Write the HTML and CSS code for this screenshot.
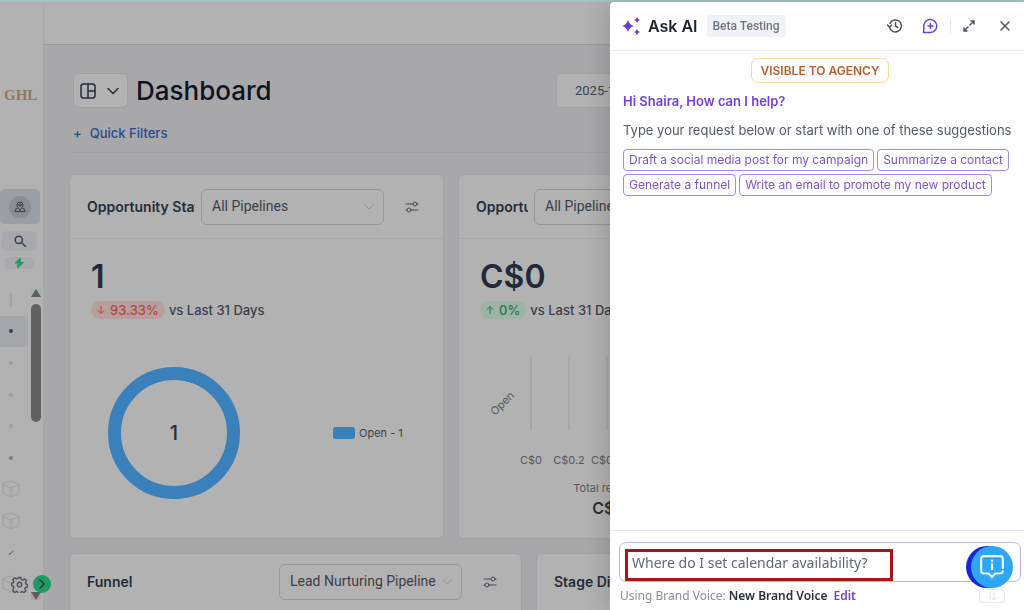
FILE: index.html
```html
<!DOCTYPE html>
<html lang="en">
<head>
  <meta charset="utf-8" />
  <meta name="viewport" content="width=device-width, initial-scale=1" />
  <link rel="stylesheet" href="styles.css">
  <title>Dashboard</title>
</head>
<body>
  <svg class="sprite" aria-hidden="true">
    <symbol id="chevron" viewBox="0 0 12 12"><path d="M1 3.500l5 5 5-5"/></symbol>
    <symbol id="sliders" viewBox="0 0 14 12"><path d="M1 3h7M6 9h7M1 9h1M12 3h1"/><circle cx="10" cy="3" r="2"/><circle cx="4" cy="9" r="2"/></symbol>
    <symbol id="cube" viewBox="0 0 20 20"><path d="M10 2l8 3.500v9L10 18l-8-3.500v-9zM2 5.500L10 9l8-3.500M10 9v9"/></symbol>
  </svg>

  <div class="app">
    <nav class="sidebar">
      <div class="logo">GHL</div>
      <button class="side-btn account" aria-label="Switch account">
        <svg viewBox="0 0 22 22"><circle class="disc" cx="11" cy="11" r="11"/><circle cx="11" cy="9" r="1.200"/><path d="M11 14c-2-2-3-3.300-3-5a3 3 0 0 1 6 0c0 1.700-1 3-3 5zM8 12.500H7L6 15.500h10l-1-3h-1"/></svg>
      </button>
      <button class="side-btn search" aria-label="Search">
        <svg viewBox="0 0 12 12"><circle cx="4.800" cy="4.800" r="3.600"/><path d="M7.500 7.500l4 4"/></svg>
      </button>
      <button class="side-btn bolt" aria-label="Quick actions">
        <svg viewBox="0 0 10 10"><path d="M6 0L1 5h3L3.500 10 9.500 4.500H6.500z"/></svg>
      </button>
      <div class="side-scroll">
        <ul class="side-list">
          <li><i class="tick"></i></li>
          <li class="active"><i class="dot"></i></li>
          <li><i class="dot faint"></i></li>
          <li><i class="dot hollow"></i></li>
          <li><i class="dot hollow"></i></li>
          <li><i class="dot mid"></i></li>
          <li><svg class="cube"><use href="#cube"/></svg></li>
          <li><svg class="cube"><use href="#cube"/></svg></li>
          <li><svg class="pen" viewBox="0 0 6 6"><path d="M1 5l1-2 1 .5L5 1"/></svg></li>
          <li><svg class="cube"><use href="#cube"/></svg></li>
        </ul>
        <div class="scrollbar">
          <i class="arrow up"></i>
          <i class="thumb"></i>
          <i class="arrow down"></i>
        </div>
      </div>
      <div class="side-bottom">
        <button aria-label="Settings">
          <svg class="gear" viewBox="0 0 24 24"><circle cx="12" cy="12" r="3.200"/><path d="M10 2h4l.7 3 1.800.8 2.700-1.600 2.700 2.700-1.600 2.700.8 1.800 1.900.6v4l-2.700.3-.8 1.800 1.600 2.700-2.700 2.700-2.700-1.600-1.700.8-.6 2.300h-3l-.8-2.500-1.800-.8-2.700 1.600-2.700-2.700L4 16l-.8-1.800L1 13.500v-3.500l2.300-.4L4 7.900 2.500 5.200 5.200 2.500 7.900 4l1.600-.6z"/></svg>
        </button>
        <button class="expand" aria-label="Expand menu">
          <svg viewBox="0 0 18 18"><path d="M7 5l4 4-4 4"/></svg>
        </button>
      </div>
    </nav>

    <main class="main">
      <div class="topbar"></div>
      <div class="content">
        <header class="page-head">
          <button class="layout-btn" aria-label="Change dashboard">
            <svg class="layout-icon" viewBox="0 0 16 16"><rect x="1" y="1" width="14" height="14" rx="2.500"/><path d="M8 1v14M8 8h7"/></svg>
            <svg class="chev"><use href="#chevron"/></svg>
          </button>
          <h1>Dashboard</h1>
          <button class="date-btn">2025-11-01</button>
        </header>
        <a class="quick" href="#"><span>+</span>Quick Filters</a>

        <div class="cards">
          <section class="card">
            <div class="card-head">
              <h2>Opportunity Status</h2>
              <div class="select">
                <select aria-label="Pipeline"><option>All Pipelines</option></select>
                <svg><use href="#chevron"/></svg>
              </div>
              <button class="tune" aria-label="Card settings"><svg><use href="#sliders"/></svg></button>
            </div>
            <div class="card-body">
              <div class="big">1</div>
              <div class="trend">
                <span class="pill down"><svg viewBox="0 0 8 8"><path d="M4 0v7.500M1 4.500l3 3 3-3"/></svg>93.33%</span>
                vs Last 31 Days
              </div>
              <div class="donut-row">
                <svg class="donut" viewBox="0 0 132 132"><circle cx="66" cy="66" r="59.500"/><text x="66" y="73">1</text></svg>
                <div class="legend"><i></i>Open - 1</div>
              </div>
            </div>
          </section>

          <section class="card">
            <div class="card-head">
              <h2>Opportunity Value</h2>
              <div class="select">
                <select aria-label="Pipeline"><option>All Pipelines</option></select>
                <svg><use href="#chevron"/></svg>
              </div>
            </div>
            <div class="card-body">
              <div class="big">C$0</div>
              <div class="trend">
                <span class="pill up"><svg viewBox="0 0 8 8"><path d="M4 8V.5M1 3.500l3-3 3 3"/></svg>0%</span>
                vs Last 31 Days
              </div>
              <svg class="bars" viewBox="0 0 280 120">
                <path d="M51 10v73M89 10v73M127 10v73M165 10v73"/>
                <text class="ylabel" x="0" y="0" transform="translate(15 69) rotate(-45)">Open</text>
                <text x="51" y="117">C$0</text>
                <text x="89" y="117">C$0.2</text>
                <text x="127" y="117">C$0.4</text>
                <text x="165" y="117">C$0.6</text>
              </svg>
              <div class="revenue">Total revenue<strong>C$0</strong></div>
            </div>
          </section>
        </div>

        <div class="cards wide">
          <section class="card">
            <div class="card-head">
              <h2>Funnel</h2>
              <div class="select">
                <select aria-label="Funnel pipeline"><option>Lead Nurturing Pipeline</option></select>
                <svg><use href="#chevron"/></svg>
              </div>
              <button class="tune" aria-label="Card settings"><svg><use href="#sliders"/></svg></button>
            </div>
          </section>
          <section class="card">
            <div class="card-head"><h2>Stage Distribution</h2></div>
          </section>
        </div>
      </div>
    </main>
  </div>

  <aside class="drawer">
    <header class="drawer-head">
      <svg class="sparkle" viewBox="0 0 18 18"><path d="M6 3q1.200 5 6 6-4.800 1-6 6-1.200-5-6-6 4.800-1 6-6zM15 0q.6 2.400 3 3-2.400.6-3 3-.6-2.400-3-3 2.400-.6 3-3zM15 12q.6 2.400 3 3-2.400.6-3 3-.6-2.400-3-3 2.400-.6 3-3z"/></svg>
      <h2>Ask AI</h2>
      <span class="beta">Beta Testing</span>
      <div class="tools">
        <button aria-label="History"><svg viewBox="0 0 16 16"><path d="M2.500 9A6 6 0 1 0 3 5.300M.6 7L2.500 9.200 4.700 7M8.500 4.500V8l2.300 1.500"/></svg></button>
        <button class="new" aria-label="New chat"><svg viewBox="0 0 16 16"><path d="M1.500 14.500l.5-5A6.500 6.500 0 1 1 8.500 14.500zM8.500 5.500v5M6 8h5"/></svg></button>
        <i></i>
        <button aria-label="Expand"><svg class="small" viewBox="0 0 12 12"><path d="M7 5l4-4M8 1h3v3M5 7l-4 4M1 8v3h3"/></svg></button>
        <button aria-label="Close"><svg class="close" viewBox="0 0 12 12"><path d="M2 2l8 8M10 2l-8 8"/></svg></button>
      </div>
    </header>

    <div class="chat">
      <div class="visible">VISIBLE TO AGENCY</div>
      <p class="hello">Hi Shaira, How can I help?</p>
      <p class="hint">Type your request below or start with one of these suggestions</p>
      <div class="chips">
        <button>Draft a social media post for my campaign</button>
        <button>Summarize a contact</button>
        <button>Generate a funnel</button>
        <button>Write an email to promote my new product</button>
      </div>
    </div>

    <footer class="composer">
      <div class="prompt">
        <input type="text" aria-label="Ask a question" value="Where do I set calendar availability?">
        <span class="highlight"></span>
      </div>
      <div class="voice">
        Using Brand Voice: <strong>New Brand Voice</strong> <a href="#">Edit</a>
        <button class="send" aria-label="Send"><svg viewBox="0 0 12 12"><path d="M4 2v7M8 3v7M6 8l2 2 2-2"/></svg></button>
      </div>
      <button class="help" aria-label="Help">
        <svg viewBox="0 0 24 24"><path d="M22 13V4.500A2.500 2.500 0 0 0 19.500 2h-15A2.500 2.500 0 0 0 2 4.500v11A2.500 2.500 0 0 0 4.500 18H9l3 3.500L15 18h4.500a2.500 2.500 0 0 0 2.500-2M12 9.500V14M12 6v.5"/></svg>
      </button>
    </footer>
  </aside>
</body>
</html>
```
FILE: styles.css
```css
* {
  box-sizing: border-box;
}
body {
  margin: 0;
  height: 100vh;
  overflow: hidden;
  border-top: 2px solid #a6c3c6;
  font-family: Inter, "Liberation Sans", sans-serif;
  font-size: 13px;
  color: #272d3a;
  background: #a8a8aa;
}
h1, h2, p, ul {
  margin: 0;
  padding: 0;
}
button, select, input {
  font: inherit;
  color: inherit;
  margin: 0;
  padding: 0;
  border: none;
  background: none;
}
svg {
  display: block;
  fill: none;
  stroke: currentColor;
  stroke-linecap: round;
  stroke-linejoin: round;
}
.sprite {
  position: absolute;
  width: 0;
  height: 0;
}
.app {
  display: flex;
  height: 100%;
}

/* sidebar */
.sidebar {
  position: relative;
  flex: 0 0 44px;
  display: flex;
  flex-direction: column;
  background: #b1b1b1;
  border-right: 1px solid #a9a9ac;
}
.logo {
  margin: 82px 0 83px 4px;
  font: bold 15px/22px "Liberation Serif", serif;
  color: #8f7962;
}
.side-btn {
  display: flex;
  align-items: center;
  justify-content: center;
  flex: none;
  background: #a8a9ac;
  border-radius: 5px;
  color: #3a3e46;
}
.account {
  width: 40px;
  height: 35px;
  background: #9b9fa3;
}
.account svg {
  width: 22px;
  height: 22px;
}
.account .disc {
  fill: #8b8d90;
  stroke: none;
}
.search {
  width: 35px;
  height: 20px;
  margin: 7px 0 6px 2px;
}
.search svg {
  width: 12px;
  height: 12px;
  stroke-width: 1.5;
}
.bolt {
  width: 30px;
  height: 12px;
  margin-left: 4px;
}
.bolt svg {
  width: 10px;
  height: 10px;
  fill: #1f9d68;
  stroke: #1f9d68;
}
.side-scroll {
  flex: 1;
  display: flex;
  justify-content: space-between;
  margin: 15px 1px 10px 0;
}
.side-list {
  width: 28px;
  display: flex;
  flex-direction: column;
  list-style: none;
}
.side-list li {
  flex: 1;
  display: flex;
  align-items: center;
  justify-content: center;
  padding-right: 6px;
}
.side-list .active {
  background: #a5a6a9;
  border-radius: 0 4px 4px 0;
}
.tick {
  width: 2px;
  height: 14px;
  background: #a2a2a4;
}
.dot {
  width: 4px;
  height: 4px;
  border-radius: 2px;
  background: #3d4047;
}
.dot.faint {
  background: #9d9da0;
}
.dot.hollow {
  background: none;
  border: 1px solid #94969a;
}
.dot.mid {
  background: #7a7d82;
}
.cube {
  flex: none;
  width: 20px;
  height: 20px;
  color: #a0a1a4;
}
.pen {
  width: 6px;
  height: 6px;
  color: #5c5f66;
}
.scrollbar {
  display: flex;
  flex-direction: column;
  align-items: center;
  width: 12px;
  padding-top: 5px;
}
.arrow {
  border: 5px solid transparent;
}
.arrow.up {
  border-top: none;
  border-bottom: 8px solid #5d5d5d;
}
.arrow.down {
  margin-top: auto;
  border-bottom: none;
  border-top: 8px solid #5d5d5d;
}
.thumb {
  width: 10px;
  height: 38%;
  margin-top: 7px;
  border-radius: 5px;
  background: #616161;
}
.side-bottom {
  position: absolute;
  left: 11px;
  bottom: 17px;
  display: flex;
  align-items: center;
  gap: 5px;
  color: #4f535a;
}
.gear {
  width: 17px;
  height: 17px;
  stroke-width: 2;
}
.expand {
  border-radius: 50%;
  background: #1f9a66;
  color: #173f31;
}
.expand svg {
  width: 18px;
  height: 18px;
  stroke-width: 1.5;
}

/* dashboard */
.main {
  flex: 1;
  min-width: 0;
  overflow: hidden;
}
.topbar {
  height: 43px;
  background: #b1b1b1;
  border-bottom: 1px solid #9b9b9e;
}
.content {
  width: 1160px;
  padding: 28px 25px 0;
}
.page-head {
  display: flex;
  align-items: center;
  margin-left: 4px;
}
.layout-btn {
  display: flex;
  align-items: center;
  justify-content: space-between;
  width: 55px;
  height: 35px;
  padding: 0 8px 0 6px;
  background: #b2b2b2;
  border: 1px solid #a0a0a3;
  border-radius: 6px;
}
.layout-icon {
  width: 16px;
  height: 16px;
  stroke-width: 1.5;
}
.chev {
  width: 12px;
  height: 12px;
  stroke-width: 1.5;
}
h1 {
  width: 420px;
  margin-left: 8px;
  font-size: 26px;
  line-height: 34px;
  font-weight: 500;
  color: #10141f;
}
.date-btn {
  width: 240px;
  height: 35px;
  padding-left: 18px;
  text-align: left;
  font-family: Roboto, sans-serif;
  color: #3f434c;
  background: #b2b2b2;
  border: 1px solid #a3a3a6;
  border-radius: 4px;
}
.quick {
  display: flex;
  gap: 8px;
  margin: 16px 0 21px 4px;
  padding-bottom: 10px;
  border-bottom: 1px solid #a1a1a4;
  line-height: 18px;
  font-weight: 500;
  color: #294a94;
  text-decoration: none;
}
.cards {
  display: flex;
  gap: 14px;
  margin-bottom: 14px;
}
.card {
  flex: 0 0 375px;
  height: 365px;
  background: #b2b2b2;
  border: 1px solid #a2a2a6;
  border-radius: 6px;
}
.wide .card {
  flex-basis: 453px;
}
.card-head {
  display: flex;
  align-items: center;
  height: 64px;
  padding-left: 17px;
  border-bottom: 1px solid #a8a8aa;
}
.wide .card-head {
  height: 56px;
  border: none;
}
h2 {
  font-size: 14px;
  line-height: 20px;
  font-weight: 600;
}
.card h2 {
  width: 108px;
  margin-right: 6px;
  overflow: hidden;
  white-space: nowrap;
}
.card + .card h2 {
  width: 52px;
}
.wide .card h2 {
  width: 186px;
}
.select {
  position: relative;
  width: 183px;
}
.select select {
  width: 100%;
  height: 36px;
  padding: 0 24px 2px 10px;
  appearance: none;
  font-family: Roboto, sans-serif;
  font-size: 14px;
  color: #3b3f47;
  border: 1px solid #97979b;
  border-radius: 6px;
}
.select svg {
  position: absolute;
  right: 10px;
  top: 13px;
  width: 10px;
  height: 10px;
  color: #8c8e94;
  pointer-events: none;
}
.tune {
  margin-left: 21px;
}
.tune svg {
  width: 14px;
  height: 12px;
  color: #494d55;
}
.card-body {
  padding: 17px 21px 0;
}
.big {
  font-size: 32px;
  line-height: 42px;
  font-weight: 600;
  color: #222a3a;
}
.trend {
  display: flex;
  align-items: center;
  gap: 4px;
  margin-top: 3px;
  line-height: 18px;
  font-weight: 500;
  white-space: nowrap;
  color: #3c4048;
}
.pill {
  display: flex;
  align-items: center;
  gap: 5px;
  padding: 0 6px;
  border-radius: 9px;
}
.pill svg {
  width: 8px;
  height: 8px;
}
.down {
  color: #b5483f;
  background: #b89f9e;
}
.up {
  color: #2f7350;
  background: #9db3a5;
}
.donut-row {
  display: flex;
  align-items: center;
  gap: 93px;
  margin: 48px 0 0 17px;
}
.donut {
  width: 132px;
  height: 132px;
  stroke: #3a80bb;
  stroke-width: 13;
}
.donut text {
  font-size: 20px;
  font-weight: 500;
  fill: #2a2e36;
  stroke: none;
  text-anchor: middle;
}
.legend {
  display: flex;
  align-items: center;
  gap: 4px;
  font-size: 11px;
  color: #3c4048;
}
.legend i {
  width: 22px;
  height: 12px;
  border-radius: 3px;
  background: #3a80bb;
}
.bars {
  width: 280px;
  height: 120px;
  margin-top: 28px;
  stroke: #9a9a9d;
}
.bars text {
  font-size: 11px;
  fill: #55585f;
  stroke: none;
  text-anchor: middle;
}
.bars .ylabel {
  text-anchor: start;
}
.revenue {
  display: flex;
  flex-direction: column;
  align-items: center;
  margin-top: 12px;
  padding-right: 74px;
  font-size: 11px;
  line-height: 18px;
  color: #55585f;
}
.revenue strong {
  font-size: 16px;
  line-height: 22px;
  font-weight: 600;
  color: #2b2f38;
}

/* Ask AI drawer */
.drawer {
  position: fixed;
  top: 2px;
  right: 0;
  bottom: 0;
  width: 414px;
  display: flex;
  flex-direction: column;
  background: #fefefe;
  border-radius: 4px 0 0 0;
  box-shadow: -4px 0 24px rgba(0, 0, 0, 0.15);
}
.drawer-head {
  display: flex;
  align-items: center;
  height: 49px;
  padding: 0 13px 1px 12px;
  border-bottom: 1px solid #ebecef;
}
.sparkle {
  width: 18px;
  height: 18px;
  fill: #6438d6;
  stroke: none;
}
.drawer-head h2 {
  margin-left: 8px;
  font-size: 16px;
  font-weight: 600;
  color: #1d2230;
}
.beta {
  margin-left: 9px;
  padding: 0 6px;
  font: 500 12px/22px Roboto, sans-serif;
  color: #6f7583;
  background: #f1f2f5;
  border-radius: 4px;
}
.tools {
  display: flex;
  align-items: center;
  gap: 12px;
  margin-left: auto;
  color: #4b5362;
}
.tools svg {
  width: 16px;
  height: 16px;
  stroke-width: 1.5;
}
.tools .small, .tools .close {
  width: 12px;
  height: 12px;
}
.tools i {
  width: 1px;
  height: 14px;
  background: #e4e5ea;
}
.tools .new {
  margin-left: 7px;
  color: #6b45cf;
}
.tools .close {
  margin-left: 12px;
}
.chat {
  flex: 1;
  padding: 7px 13px;
}
.visible {
  width: 138px;
  margin: 0 auto 9px 128px;
  font-size: 12px;
  line-height: 23px;
  font-weight: 600;
  text-align: center;
  white-space: nowrap;
  color: #b9602f;
  border: 1px solid #f6dca0;
  border-radius: 7px;
}
.hello {
  line-height: 18px;
  font-weight: 600;
  color: #7341d2;
}
.hint {
  margin: 11px 0 10px;
  line-height: 18px;
  white-space: nowrap;
  color: #545a66;
}
.chips {
  display: flex;
  flex-wrap: wrap;
  gap: 3px;
}
.chips button {
  padding: 0 5px;
  font-size: 12px;
  line-height: 20px;
  color: #7c55cc;
  border: 1px solid #a68ce0;
  border-radius: 4px;
}
.composer {
  position: relative;
  padding: 11px 3px 4px 9px;
  border-top: 1px solid #e8e8f3;
  font-family: "Noto Sans", sans-serif;
}
.prompt {
  position: relative;
}
.prompt input {
  display: block;
  width: 100%;
  height: 40px;
  padding: 0 60px 0 12px;
  font-size: 14px;
  color: #626875;
  border: 1px solid #c3b4ea;
  border-radius: 7px;
}
.highlight {
  position: absolute;
  left: 6px;
  top: 7px;
  width: 268px;
  height: 32px;
  border: 3px solid #ab1419;
  pointer-events: none;
}
.voice {
  display: flex;
  align-items: center;
  gap: 3px;
  padding: 4px 16px 0 1px;
  font-size: 12px;
  line-height: 20px;
  color: #8b8f99;
}
.voice strong {
  font-weight: 600;
  color: #2c303a;
}
.voice a {
  margin-left: 3px;
  font-weight: 600;
  color: #7040d0;
  text-decoration: none;
}
.send {
  margin-left: auto;
  padding: 0 6px;
  color: #dcdde6;
  border: 1px solid #ebebf1;
  border-radius: 4px;
}
.send svg {
  width: 12px;
  height: 12px;
}
.help {
  position: absolute;
  right: 11px;
  top: 15px;
  display: flex;
  align-items: center;
  justify-content: center;
  width: 42px;
  height: 42px;
  border-radius: 50%;
  color: #ecf8ff;
  background: #2ea5f5;
  box-shadow: -5px 0 0 #1528d0;
}
.help svg {
  width: 26px;
  height: 26px;
  stroke-width: 2;
}
```
